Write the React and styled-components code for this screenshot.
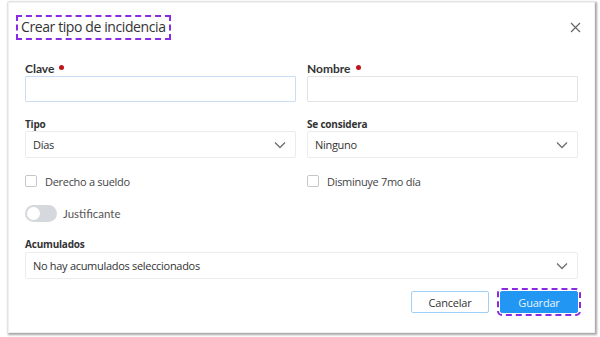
import React from "react";
import styled, { createGlobalStyle } from "styled-components";

const Global = createGlobalStyle`
  html, body { margin: 0; padding: 0; background: #ffffff; }
  body { font-family: "Open Sans", "Liberation Sans", sans-serif; color: #333; }
  * { box-sizing: border-box; }
`;

const Page = styled.div`
  width: 600px;
  height: 337px;
  padding: 2px 5px 4px 8px;
`;

const Card = styled.div`
  width: 587px;
  height: 331px;
  background: #fff;
  border: 1px solid #f1f1f1;
  box-shadow: 1px 1px 2px 1px rgba(0, 0, 0, 0.35);
  padding: 12px 16px 0 16px;
  display: flex;
  flex-direction: column;
`;

const Header = styled.div`
  display: flex;
  align-items: center;
  justify-content: space-between;
  height: 25px;
  margin-left: -9px;
  margin-right: -4px;
`;

const Title = styled.h2`
  margin: 0;
  font-family: "Open Sans", sans-serif;
  font-weight: 400;
  font-size: 14px;
  letter-spacing: -0.4px;
  color: #333;
  border: 2px dashed #8a2be2;
  padding: 1px 3px 2px 3px;
  line-height: 18px;
`;

const Close = styled.button`
  border: none;
  background: none;
  padding: 0;
  width: 14px;
  height: 14px;
  display: flex;
  align-items: center;
  justify-content: center;
`;

const Grid = styled.div`
  display: grid;
  grid-template-columns: 271px 271px;
  column-gap: 11px;
  margin-top: 23px;
`;

const Field = styled.div`
  display: flex;
  flex-direction: column;
  grid-column: ${(p) => (p.$full ? "1 / span 2" : "auto")};
  margin-bottom: ${(p) => p.$mb || 0}px;
`;

const Label = styled.label`
  font-family: ${(p) => (p.$lato ? '"Lato", sans-serif' : '"Open Sans", sans-serif')};
  font-weight: 700;
  font-size: ${(p) => (p.$lato ? "12px" : "10px")};
  letter-spacing: ${(p) => (p.$lato ? "0" : "-0.2px")};
  color: #333;
  height: 12px;
  line-height: 12px;
  margin-bottom: ${(p) => p.$gap || 1}px;
  display: flex;
  align-items: center;
  gap: 5px;
`;

const Req = styled.span`
  width: 5px;
  height: 5px;
  border-radius: 50%;
  background: #c0141b;
  display: inline-block;
  margin-top: -4px;
`;

const Input = styled.input`
  height: 26px;
  border: 1px solid ${(p) => (p.$focus ? "#c9def2" : "#e3e3e3")};
  border-radius: 1px;
  outline: none;
  font-family: "Open Sans", sans-serif;
  font-size: 11px;
  padding: 0 7px;
  width: 100%;
`;

const Select = styled.div`
  height: 27px;
  border: 1px solid #ececec;
  border-radius: 2px;
  display: flex;
  align-items: center;
  justify-content: space-between;
  padding: 0 9px 0 7px;
  font-family: "Open Sans", sans-serif;
  font-size: 11px;
  letter-spacing: -0.3px;
  color: #333;
`;

const CheckRow = styled.div`
  display: flex;
  align-items: center;
  gap: ${(p) => p.$gap || 8}px;
  height: 16px;
  font-family: "Open Sans", sans-serif;
  font-size: 11px;
  letter-spacing: -0.3px;
  color: #444;
  margin-top: ${(p) => p.$mt || 0}px;
`;

const Box = styled.span`
  width: 12px;
  height: 12px;
  border: 1px solid #c6c6c6;
  border-radius: 2px;
  background: #fff;
`;

const Toggle = styled.span`
  width: 32px;
  height: 17px;
  border-radius: 9px;
  background: #d5d9de;
  position: relative;
  &::after {
    content: "";
    position: absolute;
    left: 2px;
    top: 2px;
    width: 13px;
    height: 13px;
    border-radius: 50%;
    background: #fff;
  }
`;

const ToggleText = styled.span`
  font-family: "Lato", sans-serif;
  font-size: 11.5px;
  letter-spacing: 0;
  color: #555;
`;

const Footer = styled.div`
  display: flex;
  justify-content: flex-end;
  gap: 11px;
  margin-top: 12px;
`;

const Button = styled.button`
  width: 78px;
  height: 22px;
  font-family: "Open Sans", sans-serif;
  font-size: 11px;
  letter-spacing: -0.2px;
  border-radius: 2px;
  cursor: pointer;
  border: 1px solid ${(p) => (p.$primary ? "#2196f3" : "#9fd0f7")};
  background: ${(p) => (p.$primary ? "#2196f3" : "#fff")};
  color: ${(p) => (p.$primary ? "#e8f4fe" : "#333")};
  outline: ${(p) => (p.$primary ? "2px dashed #8a2be2" : "none")};
  outline-offset: 1px;
  padding: 0;
`;

const Chevron = () => (
  <svg width="12" height="8" viewBox="0 0 12 8" fill="none">
    <path d="M1 1.5 L6 6.5 L11 1.5" stroke="#6b6f75" strokeWidth="1.3" />
  </svg>
);

export default function App() {
  return (
    <Page>
      <Global />
      <Card>
        <Header>
          <Title>Crear tipo de incidencia</Title>
          <Close aria-label="Cerrar">
            <svg width="11" height="11" viewBox="0 0 11 11">
              <path d="M1 1 L10 10 M10 1 L1 10" stroke="#666" strokeWidth="1.2" />
            </svg>
          </Close>
        </Header>
        <Grid>
          <Field $mb={16}>
            <Label $lato>
              Clave <Req />
            </Label>
            <Input $focus />
          </Field>
          <Field $mb={16}>
            <Label $lato>
              Nombre <Req />
            </Label>
            <Input />
          </Field>
          <Field $mb={15}>
            <Label>Tipo</Label>
            <Select>
              Días <Chevron />
            </Select>
          </Field>
          <Field $mb={15}>
            <Label>Se considera</Label>
            <Select>
              Ninguno <Chevron />
            </Select>
          </Field>
          <Field>
            <CheckRow>
              <Box /> Derecho a sueldo
            </CheckRow>
          </Field>
          <Field>
            <CheckRow>
              <Box /> Disminuye 7mo día
            </CheckRow>
          </Field>
          <Field $full $mb={17}>
            <CheckRow $mt={16} $gap={6}>
              <Toggle />
              <ToggleText>Justificante</ToggleText>
            </CheckRow>
          </Field>
          <Field $full>
            <Label $gap={2}>Acumulados</Label>
            <Select>
              No hay acumulados seleccionados <Chevron />
            </Select>
          </Field>
        </Grid>
        <Footer>
          <Button>Cancelar</Button>
          <Button $primary>Guardar</Button>
        </Footer>
      </Card>
    </Page>
  );
}
